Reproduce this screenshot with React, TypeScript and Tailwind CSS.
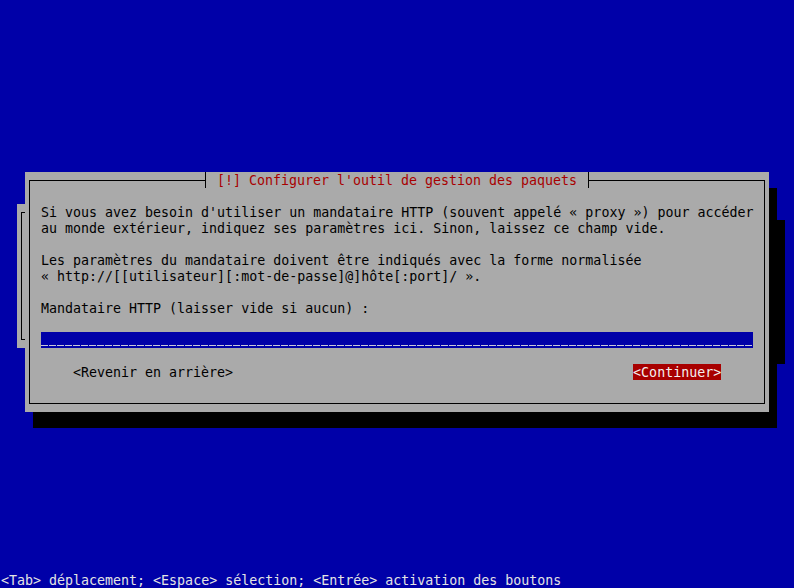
import React from 'react';

const mono = 'font-["DejaVu_Sans_Mono","Liberation_Mono",monospace] text-[13.3px] leading-[16px] whitespace-pre';

const BackDialog: React.FC = () => (
  <div className="absolute left-[17px] top-[204px] w-[760px] h-[144px] bg-[#aaaaaa] shadow-[8px_16px_0_0_#000] px-[4px] py-[8px]">
    <div className="h-full border border-black" />
  </div>
);

const Line: React.FC<{ children?: React.ReactNode }> = ({ children }) => (
  <p className="h-[16px] pt-[1px]">{children}</p>
);

const ProxyDialog: React.FC = () => (
  <div className={`absolute left-[25px] top-[172px] w-[744px] h-[240px] bg-[#aaaaaa] shadow-[8px_16px_0_0_#000] px-[4px] py-[8px] ${mono}`}>
    {/* title sits on the top border */}
    <div className="absolute top-0 inset-x-0 flex justify-center">
      <span className="h-[16px] bg-[#aaaaaa] border-x border-black px-[11px] pt-[1px] text-[#a80000]">
        [!] Configurer l'outil de gestion des paquets
      </span>
    </div>

    <div className="h-full border border-black flex flex-col pl-[11px] pt-[23px] text-black">
      <Line>Si vous avez besoin d'utiliser un mandataire HTTP (souvent appelé « proxy ») pour accéder</Line>
      <Line>au monde extérieur, indiquez ses paramètres ici. Sinon, laissez ce champ vide.</Line>
      <Line />
      <Line>Les paramètres du mandataire doivent être indiqués avec la forme normalisée</Line>
      <Line>« http://[[utilisateur][:mot-de-passe]@]hôte[:port]/ ».</Line>
      <Line />
      <Line>Mandataire HTTP (laisser vide si aucun) :</Line>
      <Line />

      {/* input field */}
      <div className="w-[712px] h-[16px] bg-[#0000a8] flex flex-col justify-end pb-[2px]">
        <div className="h-[1px] bg-[repeating-linear-gradient(90deg,#c8c8d8_0_7px,transparent_7px_8px)]" />
      </div>

      <Line />

      {/* buttons */}
      <div className="flex h-[16px] pl-[32px] gap-[400px]">
        <span className="pt-[1px]">&lt;Revenir en arrière&gt;</span>
        <span className="bg-[#a80000] text-[#f4f0f0] pt-[1px]">&lt;Continuer&gt;</span>
      </div>
    </div>
  </div>
);

export default function App() {
  return (
    <div className="relative w-[794px] h-[588px] overflow-hidden bg-[#0000a8] flex flex-col justify-end">
      <BackDialog />
      <ProxyDialog />
      <div className={`pl-[1px] h-[16px] pt-[1px] text-[#e4e4e4] ${mono}`}>
        &lt;Tab&gt; déplacement; &lt;Espace&gt; sélection; &lt;Entrée&gt; activation des boutons
      </div>
    </div>
  );
}
